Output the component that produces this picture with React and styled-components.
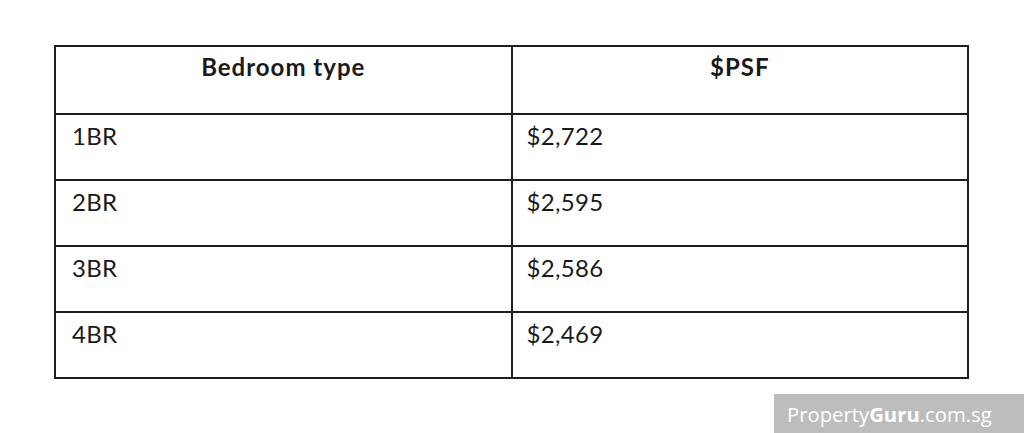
import React from "react";
import styled, { createGlobalStyle } from "styled-components";

const GlobalStyle = createGlobalStyle`
  body {
    margin: 0;
    background: #ffffff;
    font-family: Lato, "Open Sans", sans-serif;
  }
`;

const Page = styled.div`
  width: 1024px;
  height: 433px;
  display: flex;
  flex-direction: column;
  padding-top: 45px;
  box-sizing: border-box;
  background: #ffffff;
`;

const Table = styled.table`
  margin-left: 54px;
  width: 915px;
  border-collapse: collapse;
  border: 2px solid #1e1e1e;
  color: #1a1a1a;
`;

const HeadCell = styled.th`
  width: 50%;
  height: 68px;
  padding: 5px 0 0;
  box-sizing: border-box;
  vertical-align: top;
  text-align: center;
  font-size: 24px;
  font-weight: 700;
  letter-spacing: 1px;
  border: 2px solid #1e1e1e;
`;

const Cell = styled.td`
  height: 66px;
  padding: ${(p) => (p.$left ? "6px 0 0 16px" : "6px 0 0 14px")};
  box-sizing: border-box;
  vertical-align: top;
  font-size: 24px;
  font-weight: 400;
  letter-spacing: 0.3px;
  border: 2px solid #1e1e1e;
`;

const Footer = styled.div`
  margin-top: auto;
  display: flex;
  justify-content: flex-end;
`;

const Watermark = styled.div`
  width: 250px;
  height: 39px;
  background: #bdbdbd;
  color: #ffffff;
  font-family: "Open Sans", sans-serif;
  font-size: 20.3px;
  font-weight: 400;
  display: flex;
  align-items: center;
  padding-left: 13px;
  box-sizing: border-box;
`;

const Bold = styled.span`
  font-weight: 700;
`;

const rows = [
  ["1BR", "$2,722"],
  ["2BR", "$2,595"],
  ["3BR", "$2,586"],
  ["4BR", "$2,469"],
];

export default function App() {
  return (
    <>
      <GlobalStyle />
      <Page>
        <Table>
          <thead>
            <tr>
              <HeadCell>Bedroom type</HeadCell>
              <HeadCell>$PSF</HeadCell>
            </tr>
          </thead>
          <tbody>
            {rows.map(([type, psf]) => (
              <tr key={type}>
                <Cell $left>{type}</Cell>
                <Cell>{psf}</Cell>
              </tr>
            ))}
          </tbody>
        </Table>
        <Footer>
          <Watermark>
            Property<Bold>Guru</Bold>.com.sg
          </Watermark>
        </Footer>
      </Page>
    </>
  );
}
